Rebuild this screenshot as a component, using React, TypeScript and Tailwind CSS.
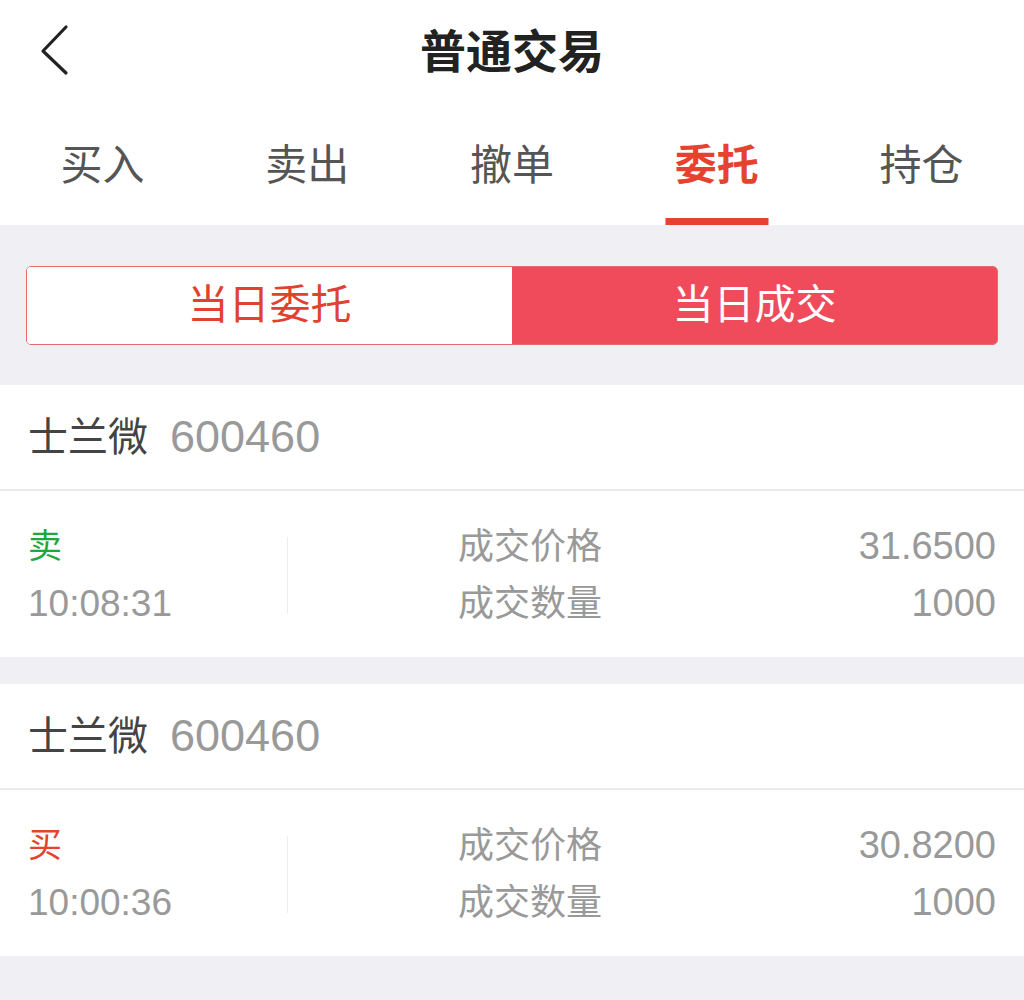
import React, { useState } from "react";

const font = { fontFamily: '"Liberation Sans", "Noto Sans CJK SC", sans-serif' };

const tabs = ["买入", "卖出", "撤单", "委托", "持仓"];

const trades = [
  { name: "士兰微", code: "600460", side: "卖", time: "10:08:31", price: "31.6500", qty: "1000" },
  { name: "士兰微", code: "600460", side: "买", time: "10:00:36", price: "30.8200", qty: "1000" },
];

function TradeCard({ t }: { t: (typeof trades)[number] }) {
  return (
    <div className="bg-white">
      {/* Stock header */}
      <div className="h-[106px] flex items-center px-[28px] border-b-2 border-[#ebebeb]">
        <span className="text-[40px] text-[#444]">{t.name}</span>
        <span className="text-[45px] text-[#999] ml-[22px]">{t.code}</span>
      </div>

      {/* Detail row */}
      <div className="h-[166px] flex items-center px-[28px] pt-[2px]">
        <div className="w-[259px] flex flex-col leading-[57px]">
          <span className={`text-[34px] ${t.side === "卖" ? "text-[#1ea83a]" : "text-[#e5432d]"}`}>{t.side}</span>
          <span className="text-[37px] text-[#999]">{t.time}</span>
        </div>
        <div className="w-px h-[77px] bg-[#eeeeee]" />
        <div className="ml-[170px] flex flex-col leading-[57px] text-[36px] text-[#999]">
          <span>成交价格</span>
          <span>成交数量</span>
        </div>
        <div className="flex-1 flex flex-col items-end leading-[57px] text-[38px] text-[#999]">
          <span>{t.price}</span>
          <span>{t.qty}</span>
        </div>
      </div>
    </div>
  );
}

export default function App() {
  const [tab, setTab] = useState(3);
  const [seg, setSeg] = useState(1);

  return (
    <div className="w-[1024px] min-h-[1000px] bg-[#efeff4]" style={font}>
      {/* Nav bar */}
      <div className="bg-white">
        <div className="h-[100px] grid grid-cols-[1fr_auto_1fr] items-center">
          <div className="pl-[36px]">
            <svg width="40" height="60" viewBox="0 0 40 60" fill="none">
              <path d="M30 7 L7 31 L30 53" stroke="#222" strokeWidth="3.2" strokeLinecap="round" strokeLinejoin="round" />
            </svg>
          </div>
          <h1 className="text-[46px] font-bold text-[#222] pt-[4px]">普通交易</h1>
          <div />
        </div>

        {/* Tabs */}
        <div className="h-[125px] grid grid-cols-5">
          {tabs.map((name, i) => (
            <button
              key={name}
              onClick={() => setTab(i)}
              className="relative flex items-center justify-center pt-[6px]"
            >
              <span className={`text-[42px] ${i === tab ? "text-[#e5432d] font-bold" : "text-[#555]"}`}>{name}</span>
              {i === tab && <span className="absolute bottom-0 left-1/2 -translate-x-1/2 w-[103px] h-[7px] bg-[#e5432d]" />}
            </button>
          ))}
        </div>
      </div>

      {/* Segmented control */}
      <div className="pt-[41px] pb-[40px] px-[26px]">
        <div className="h-[79px] grid grid-cols-2 rounded-[5px] border border-[#e86a6f] overflow-hidden">
          {["当日委托", "当日成交"].map((s, i) => (
            <button
              key={s}
              onClick={() => setSeg(i)}
              className={`flex items-center justify-center text-[41px] ${
                i === seg ? "bg-[#f04b5b] text-white" : "bg-white text-[#e2412f]"
              }`}
            >
              {s}
            </button>
          ))}
        </div>
      </div>

      {/* Trade list */}
      <div className="flex flex-col gap-[27px]">
        {trades.map((t, i) => (
          <TradeCard key={i} t={t} />
        ))}
      </div>
    </div>
  );
}
